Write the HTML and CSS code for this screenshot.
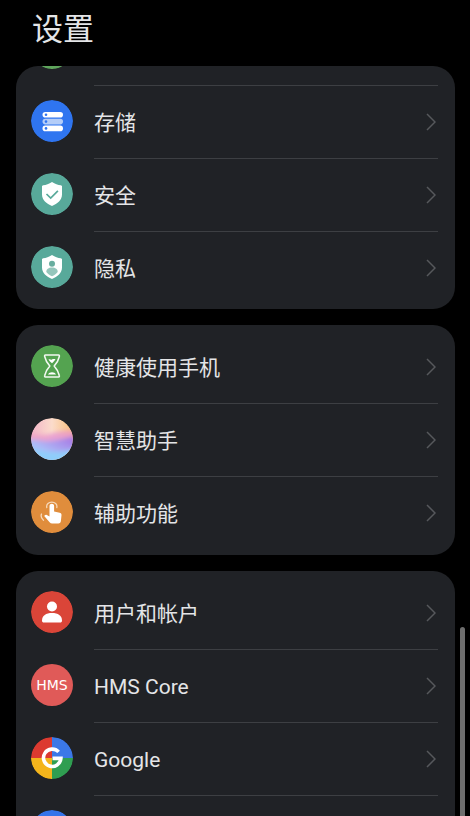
FILE: index.html
```html
<!DOCTYPE html>
<html lang="zh-CN">
<head>
<meta charset="utf-8">
<meta name="viewport" content="width=device-width, initial-scale=1">
<title>设置</title>
<link rel="stylesheet" href="styles.css">
</head>
<body>
<svg class="defs" aria-hidden="true">
  <symbol id="chevron" viewBox="0 0 10 18"><path d="M1 1l8 8-8 8" fill="none" stroke="currentColor" stroke-width="1.5"/></symbol>
</svg>
<header class="header"><h1 class="title">设置</h1></header>
<main class="list">
  <nav class="card card-scrolled">
    <a class="row" href="#battery">
      <svg class="icon" viewBox="0 0 42 42" aria-hidden="true"><circle cx="21" cy="21" r="21" fill="#5fa55c"/></svg>
      <span class="body"></span>
    </a>
    <a class="row" href="#storage">
      <svg class="icon" viewBox="0 0 42 42" aria-hidden="true">
        <circle cx="21" cy="21" r="21" fill="#2f75f0"/>
        <rect x="11.5" y="12" width="20.5" height="5.6" rx="2.8" fill="#fff"/>
        <rect x="11.5" y="18.8" width="20.5" height="5.6" rx="2.8" fill="#b4cdf8"/>
        <rect x="11.5" y="25.6" width="20.5" height="5.6" rx="2.8" fill="#fff"/>
        <g fill="#2f75f0"><circle cx="15" cy="14.8" r="1.3"/><circle cx="15" cy="21.6" r="1.3"/><circle cx="15" cy="28.4" r="1.3"/></g>
      </svg>
      <span class="body"><span class="label">存储</span><svg class="chevron" aria-hidden="true"><use href="#chevron"/></svg></span>
    </a>
    <a class="row" href="#security">
      <svg class="icon" viewBox="0 0 42 42" aria-hidden="true">
        <circle cx="21" cy="21" r="21" fill="#58a99a"/>
        <path d="M21 9c3 2 6 3 8.800 3.300.7.100 1.200.6 1.200 1.300v7.900c0 5.500-4.500 9.200-10 11.500-5.500-2.300-10-6-10-11.500v-7.900c0-.7.500-1.200 1.200-1.300C15 12 18 11 21 9z" fill="#fff"/>
        <path d="M15.500 21l4.200 4 7.200-7.200" fill="none" stroke="#58a99a" stroke-width="1.700"/>
      </svg>
      <span class="body"><span class="label">安全</span><svg class="chevron" aria-hidden="true"><use href="#chevron"/></svg></span>
    </a>
    <a class="row" href="#privacy">
      <svg class="icon" viewBox="0 0 42 42" aria-hidden="true">
        <circle cx="21" cy="21" r="21" fill="#58a99a"/>
        <path d="M21 9c3 2 6 3 8.800 3.300.7.100 1.200.6 1.200 1.300v7.900c0 5.500-4.500 9.200-10 11.500-5.500-2.300-10-6-10-11.500v-7.900c0-.7.500-1.200 1.200-1.300C15 12 18 11 21 9z" fill="#fff"/>
        <circle cx="21" cy="17.800" r="3" fill="#68ad9f"/>
        <path d="M15.300 26c0-3 2.200-4.500 5.700-4.500s5.700 1.500 5.700 4.500c-1.500 2-3.400 3.200-5.700 4.300-2.300-1.100-4.200-2.300-5.700-4.300z" fill="#95c6bc"/>
      </svg>
      <span class="body"><span class="label">隐私</span><svg class="chevron" aria-hidden="true"><use href="#chevron"/></svg></span>
    </a>
  </nav>
  <nav class="card">
    <a class="row" href="#balance">
      <svg class="icon" viewBox="0 0 42 42" aria-hidden="true">
        <circle cx="21" cy="21" r="21" fill="#54a350"/>
        <path d="M14.500 10h13c1 0 1 1 .7 1.800-.8 4-2.200 6-5 9.200 2.800 3.200 4.200 5.200 5 9.200.3.800.3 1.800-.7 1.800h-13c-1 0-1-1-.7-1.800.8-4 2.200-6 5-9.200-2.800-3.200-4.200-5.200-5-9.200-.3-.8-.3-1.800.7-1.800z" fill="none" stroke="#f2f8f1" stroke-width="1.600" stroke-linejoin="round"/>
        <path d="M17.500 14.500c1.300-.8 2.400.7 3.500 0s2.200-.6 3.500-.2c-.9 1.600-2 2.600-3.500 3.900-1.500-1.300-2.700-2.300-3.500-3.700zM17 29.500c.8-1.600 2.200-2.300 4-2.300s3.200.7 4 2.300z" fill="#fff"/>
      </svg>
      <span class="body"><span class="label">健康使用手机</span><svg class="chevron" aria-hidden="true"><use href="#chevron"/></svg></span>
    </a>
    <a class="row" href="#assistant">
      <svg class="icon" viewBox="0 0 42 42" aria-hidden="true">
        <defs>
          <clipPath id="orb"><circle cx="21" cy="21" r="21"/></clipPath>
          <linearGradient id="sky" x1="0" y1="0" x2="1" y2="0"><stop offset="0" stop-color="#f2b4c8"/><stop offset=".5" stop-color="#fbdccb"/><stop offset="1" stop-color="#f9bf78"/></linearGradient>
          <linearGradient id="pink" x1="0" y1="0" x2="1" y2="0"><stop offset="0" stop-color="#f2a6c4"/><stop offset=".55" stop-color="#e9a2d2"/><stop offset="1" stop-color="#f0a0b0"/></linearGradient>
          <linearGradient id="sea" x1="0" y1="1" x2="1" y2="0"><stop offset="0" stop-color="#86d2fa"/><stop offset=".45" stop-color="#adbdf8"/><stop offset="1" stop-color="#a56be0"/></linearGradient>
          <filter id="soft" x="-20%" y="-20%" width="140%" height="140%"><feGaussianBlur stdDeviation="2"/></filter>
        </defs>
        <g clip-path="url(#orb)">
          <rect width="42" height="42" fill="url(#sky)"/>
          <g filter="url(#soft)">
            <path d="M-6 17c10-3 16 2 25-1s16-3 29-5v22H-6z" fill="url(#pink)"/>
            <path d="M-6 22c10-2 16 2 26 1s16-4 28-5v32H-6z" fill="url(#sea)"/>
            <path d="M-6 29c14 2 18 5 29 5s14-2 25-4v20H-6z" fill="#8fcdfa"/>
          </g>
        </g>
      </svg>
      <span class="body"><span class="label">智慧助手</span><svg class="chevron" aria-hidden="true"><use href="#chevron"/></svg></span>
    </a>
    <a class="row" href="#accessibility">
      <svg class="icon" viewBox="0 0 42 42" aria-hidden="true">
        <circle cx="21" cy="21" r="21" fill="#e08d3c"/>
        <path d="M18.500 15c0-3 4.600-3 4.600 0v5.600l5.500 1.200c1.300.3 2 1.100 1.900 2.400l-.6 5.800c-.2 1.600-1 2.500-2.500 2.500h-6.200c-1.100 0-1.900-.4-2.600-1.200l-5.400-6.200c.9-1.500 2.300-1.500 3.500-.7l1.800 1.200z" fill="#fff"/>
        <path d="M15.800 16.500c-1.500-7.200 11.500-7.200 10 0M10.500 23c-1 2.500 0 4.500 2 6.200" fill="none" stroke="#f6d9bb" stroke-width="1.300" stroke-linecap="round"/>
      </svg>
      <span class="body"><span class="label">辅助功能</span><svg class="chevron" aria-hidden="true"><use href="#chevron"/></svg></span>
    </a>
  </nav>
  <nav class="card">
    <a class="row" href="#accounts">
      <svg class="icon" viewBox="0 0 42 42" aria-hidden="true">
        <circle cx="21" cy="21" r="21" fill="#da4538"/>
        <circle cx="21" cy="15.500" r="5" fill="#fff"/>
        <path d="M11 29.500c0-5 4-7.500 10-7.500s10 2.500 10 7.500c0 1.500-.6 2-2 2H13c-1.400 0-2-.5-2-2z" fill="#fff"/>
      </svg>
      <span class="body"><span class="label">用户和帐户</span><svg class="chevron" aria-hidden="true"><use href="#chevron"/></svg></span>
    </a>
    <a class="row" href="#hms">
      <span class="icon hms" aria-hidden="true">HMS</span>
      <span class="body"><span class="label">HMS Core</span><svg class="chevron" aria-hidden="true"><use href="#chevron"/></svg></span>
    </a>
    <a class="row" href="#google">
      <svg class="icon" viewBox="0 0 42 42" aria-hidden="true">
        <path d="M21 21V0A21 21 0 0 0 0 21z" fill="#dc3a30"/>
        <path d="M21 21h21A21 21 0 0 0 21 0z" fill="#3b78e7"/>
        <path d="M21 21H0a21 21 0 0 0 21 21z" fill="#f4b51c"/>
        <path d="M21 21v21a21 21 0 0 0 21-21z" fill="#2f9e51"/>
        <path d="M27.600 14.900A8.700 8.700 0 1 0 29.900 21.400H21.500" fill="none" stroke="#fff" stroke-width="3.600"/>
      </svg>
      <span class="body"><span class="label">Google</span><svg class="chevron" aria-hidden="true"><use href="#chevron"/></svg></span>
    </a>
    <a class="row" href="#system">
      <svg class="icon" viewBox="0 0 42 42" aria-hidden="true"><circle cx="21" cy="21" r="21" fill="#3574ea"/></svg>
      <span class="body"></span>
    </a>
  </nav>
</main>
<div class="scrollbar" aria-hidden="true"></div>
</body>
</html>
```
FILE: styles.css
```css
* {
  box-sizing: border-box;
}

body {
  margin: 0;
  height: 100vh;
  overflow: hidden;
  display: flex;
  flex-direction: column;
  background: #000;
  color: #e4e5e7;
  font-family: Roboto, "Noto Sans CJK SC", sans-serif;
}

.defs {
  position: absolute;
  width: 0;
  height: 0;
}

.header {
  flex: none;
  height: 66px;
  padding: 8px 32px 0;
}

.title {
  margin: 0;
  font-size: 31px;
  line-height: 44px;
  font-weight: 400;
}

.list {
  flex: 1;
  min-height: 0;
  overflow: hidden;
  display: flex;
  flex-direction: column;
  gap: 16px;
  padding: 0 15px 0 16px;
}

.card {
  flex: none;
  padding: 6px 0 5px;
  border-radius: 22px;
  overflow: hidden;
  background: #202226;
}

.card-scrolled {
  padding: 0 0 4px;
}

.card-scrolled .row:first-child {
  margin-top: -53px;
}

.row {
  display: flex;
  align-items: center;
  gap: 21px;
  height: 73px;
  padding: 0 17px 0 15px;
  color: inherit;
  text-decoration: none;
}

.icon {
  flex: none;
  width: 42px;
  height: 42px;
  margin-bottom: 3px;
  border-radius: 50%;
}

.body {
  flex: 1;
  align-self: stretch;
  display: flex;
  align-items: center;
  justify-content: space-between;
  padding-right: 2px;
  border-bottom: 1px solid #3d3f43;
}

.row:last-child .body {
  border-bottom-color: transparent;
}

.label {
  padding-top: 2px;
  font-size: 21px;
  line-height: 30px;
}

.chevron {
  width: 10px;
  height: 18px;
  color: #56585c;
}

.hms {
  display: flex;
  align-items: center;
  justify-content: center;
  background: #e05a58;
  color: #fff;
  font-family: "DejaVu Sans", sans-serif;
  font-size: 14px;
}

.scrollbar {
  position: absolute;
  right: 5px;
  top: 627px;
  bottom: 0;
  width: 5px;
  border-radius: 3px 3px 0 0;
  background: #6e6e6e;
}
```
